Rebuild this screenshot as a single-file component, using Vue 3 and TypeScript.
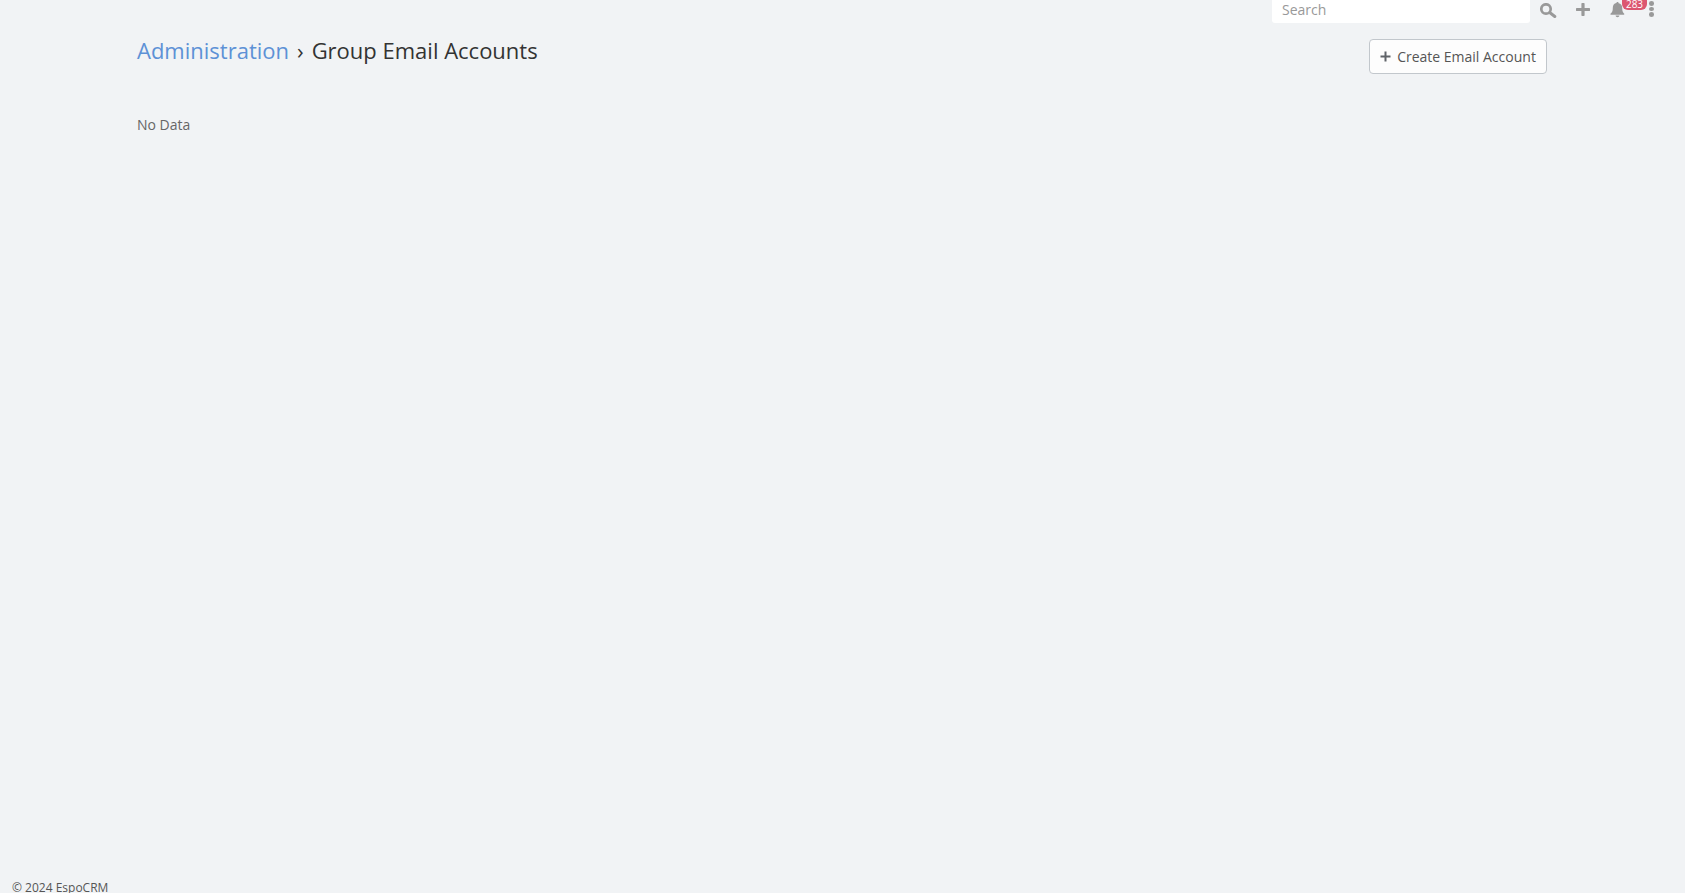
<script setup lang="ts">
const title = 'Group Email Accounts'
</script>

<template>
  <div class="app">
    <nav class="topbar">
      <div class="search">Search</div>
      <button class="icon search-icon" aria-label="Search">
        <svg width="17" height="15" viewBox="0 0 17 15"><circle cx="6" cy="6" r="4.700" fill="none" stroke="#999" stroke-width="2.700"/><path d="M10 9.800l4.800 3.700" stroke="#999" stroke-width="3" stroke-linecap="round"/></svg>
      </button>
      <button class="icon plus-icon" aria-label="Create">
        <svg width="14" height="13" viewBox="0 0 14 13"><path d="M7 1.200v10.600M1.200 6.500h11.600" stroke="#999" stroke-width="3.200" stroke-linecap="round"/></svg>
      </button>
      <div class="bell">
        <svg width="15" height="17" viewBox="0 0 16 17"><path d="M8 0.500c.7 0 1.200.5 1.200 1.200 2.400.5 3.800 2.300 3.800 4.800 0 3.500.7 5 2.200 6.600.3.4.1 1-.4 1H.9c-.5 0-.7-.6-.4-1C2.300 11.500 3 10 3 6.500c0-2.500 1.400-4.300 3.800-4.800C6.800 1 7.300.5 8 .5zM6 15h4c0 1-.9 1.800-2 1.800S6 16 6 15z" fill="#999"/></svg>
        <span class="badge">283</span>
      </div>
      <div class="dots" aria-label="Menu"><i></i><i></i><i></i></div>
    </nav>

    <main class="page">
      <header class="page-head">
        <h3 class="crumbs">
          <a class="crumb-link">Administration</a>
          <span class="sep">›</span>
          <span>{{ title }}</span>
        </h3>
        <button class="create-btn">
          <svg width="11" height="11" viewBox="0 0 11 11"><path d="M5.500 0.500v10M0.500 5.500h10" stroke="#5f6368" stroke-width="2"/></svg>
          <span>Create Email Account</span>
        </button>
      </header>
      <p class="no-data">No Data</p>
    </main>

    <footer class="footer">© 2024 EspoCRM</footer>
  </div>
</template>

<style>
html, body { margin: 0; background: #f1f3f5; }
</style>

<style scoped>
.app {
  height: 893px;
  overflow: hidden;
  display: flex;
  flex-direction: column;
  background: #f1f3f5;
  font-family: "Open Sans", sans-serif;
  font-size: 14px;
  color: #555;
}
.topbar {
  height: 23px;
  display: flex;
  align-items: flex-start;
  padding-right: 31px;
  justify-content: flex-end;
  flex: none;
}
.search {
  box-sizing: border-box;
  width: 258px;
  height: 23px;
  padding: 0 10px;
  line-height: 19px;
  background: #fff;
  border-radius: 0 0 3px 3px;
  color: #999;
  margin-right: 10px;
}
.icon {
  border: 0;
  padding: 0;
  background: none;
  display: flex;
}
.search-icon { margin: 3px 19px 0 0; }
.plus-icon { margin: 3px 20px 0 0; }
.bell {
  position: relative;
  width: 16px;
  height: 17px;
  margin: 1px 22px 0 0;
}
.badge {
  position: absolute;
  left: 12px;
  top: -6px;
  width: 25px;
  height: 15px;
  border-radius: 6px;
  background: #dc5670;
  color: #fff;
  font-size: 10px;
  line-height: 19px;
  text-align: center;
}
.dots {
  width: 6px;
  display: flex;
  flex-direction: column;
  align-items: center;
  gap: 1px;
  margin-top: 1px;
}
.dots i {
  display: block;
  width: 5px;
  height: 4.500px;
  border-radius: 50%;
  background: #999;
}
.page {
  flex: 1;
  padding: 0 138px 0 137px;
}
.page-head {
  display: flex;
  justify-content: space-between;
  align-items: flex-start;
}
.crumbs {
  margin: 12px 0 0;
  font-size: 22px;
  font-weight: 400;
  line-height: 30px;
  color: #333;
}
.crumb-link { color: #5d91d6; }
.sep { margin: 0 8px; font-size: 22px; }
.create-btn {
  box-sizing: border-box;
  height: 35px;
  width: 178px;
  margin-top: 16px;
  border: 1px solid #c2c7cc;
  border-radius: 4px;
  background: #fdfdfd;
  color: #555;
  font: 14px "Open Sans", sans-serif;
  display: flex;
  align-items: center;
  justify-content: center;
  gap: 6px;
}
.no-data {
  margin: 41px 0 0;
  line-height: 20px;
  color: #666;
}
.footer {
  flex: none;
  height: 14px;
  padding-left: 12px;
  font-size: 12px;
  line-height: 17px;
}
</style>
